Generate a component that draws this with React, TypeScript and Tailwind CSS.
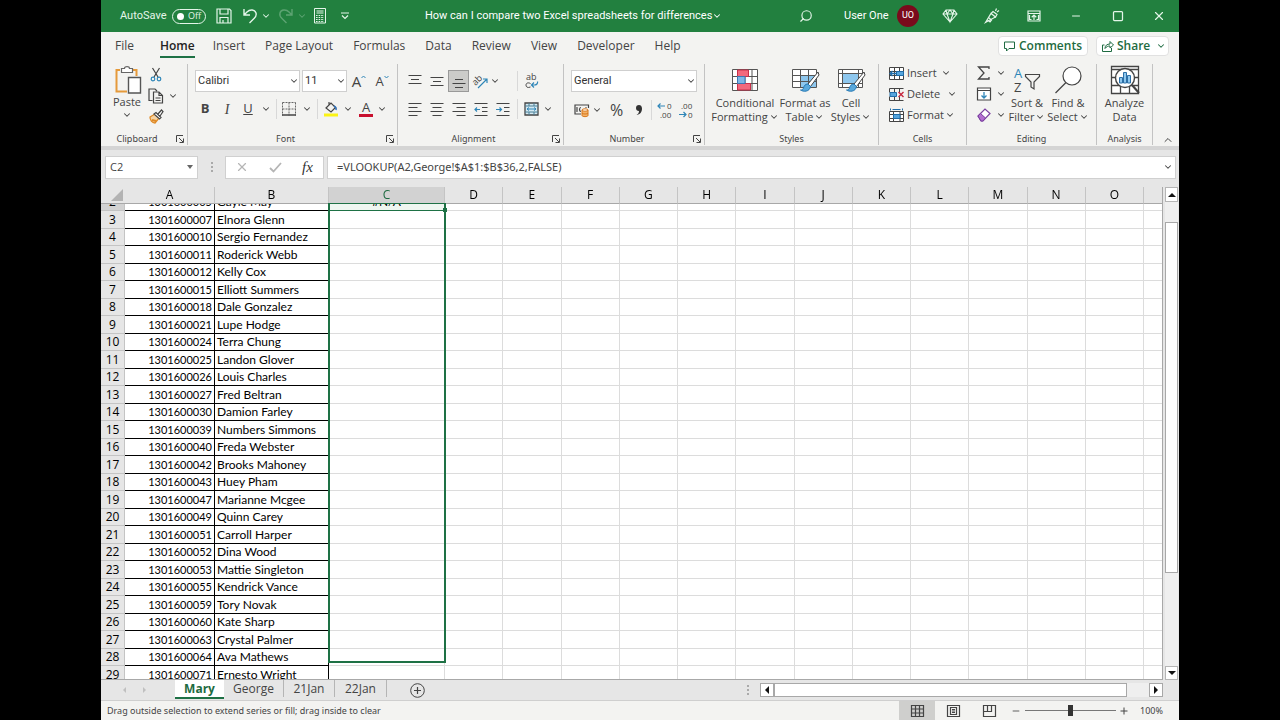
import React, { useLayoutEffect, useRef } from 'react';
import { ChevronDown, Search, Square, X, Minus } from 'lucide-react';

const ribbonTabs = ['File', 'Home', 'Insert', 'Page Layout', 'Formulas', 'Data', 'Review', 'View', 'Developer', 'Help'];

const columns = ['A', 'B', 'C', 'D', 'E', 'F', 'G', 'H', 'I', 'J', 'K', 'L', 'M', 'N', 'O', ''];

const people: [string, string][] = [
  ['1301600005', 'Gayle May'],
  ['1301600007', 'Elnora Glenn'],
  ['1301600010', 'Sergio Fernandez'],
  ['1301600011', 'Roderick Webb'],
  ['1301600012', 'Kelly Cox'],
  ['1301600015', 'Elliott Summers'],
  ['1301600018', 'Dale Gonzalez'],
  ['1301600021', 'Lupe Hodge'],
  ['1301600024', 'Terra Chung'],
  ['1301600025', 'Landon Glover'],
  ['1301600026', 'Louis Charles'],
  ['1301600027', 'Fred Beltran'],
  ['1301600030', 'Damion Farley'],
  ['1301600039', 'Numbers Simmons'],
  ['1301600040', 'Freda Webster'],
  ['1301600042', 'Brooks Mahoney'],
  ['1301600043', 'Huey Pham'],
  ['1301600047', 'Marianne Mcgee'],
  ['1301600049', 'Quinn Carey'],
  ['1301600051', 'Carroll Harper'],
  ['1301600052', 'Dina Wood'],
  ['1301600053', 'Mattie Singleton'],
  ['1301600055', 'Kendrick Vance'],
  ['1301600059', 'Tory Novak'],
  ['1301600060', 'Kate Sharp'],
  ['1301600063', 'Crystal Palmer'],
  ['1301600064', 'Ava Mathews'],
  ['1301600071', 'Ernesto Wright'],
];

interface IconProps {
  w: number;
  h: number;
  children: React.ReactNode;
  className?: string;
}

function Icon({ w, h, children, className = '' }: IconProps) {
  return (
    <svg
      width={w}
      height={h}
      viewBox={`0 0 ${w} ${h}`}
      fill="none"
      stroke="currentColor"
      strokeWidth="1"
      className={`shrink-0 overflow-visible ${className}`}
      aria-hidden="true"
    >
      {children}
    </svg>
  );
}

function Chevron({ className = '' }: { className?: string }) {
  return <ChevronDown className={`w-2.5 h-2.5 shrink-0 ${className}`} strokeWidth={2.5} aria-hidden="true" />;
}

interface ToolProps {
  label: string;
  className?: string;
  children: React.ReactNode;
}

function Tool({ label, className = '', children }: ToolProps) {
  return (
    <button type="button" aria-label={label} className={`flex items-center justify-center shrink-0 ${className}`}>
      {children}
    </button>
  );
}

function Divider() {
  return <span className="w-px h-5 bg-[#d8d8d8] shrink-0" />;
}

/* ---------- Title bar ---------- */

function TitleBar() {
  return (
    <header className="flex items-center h-8 bg-[#22803f] text-[#e4f5e9] shrink-0">
      <div className="flex items-center w-[324px] pl-[19px] shrink-0">
        <span className="w-[52px] text-[11px] font-['Roboto',sans-serif]">AutoSave</span>
        <button
          type="button"
          role="switch"
          aria-checked="false"
          aria-label="AutoSave"
          className="flex items-center justify-between w-[34px] h-[15px] rounded-full border border-current px-1 text-[9px] leading-3"
        >
          <span className="w-[7px] h-[7px] rounded-full bg-white" />
          Off
        </button>
        <Tool label="Save" className="w-9">
          <Icon w={16} h={16}>
            <path d="M1 1h12.5L15 2.500V15H1zM4 1v5h8V1M4 15v-5.500h8V15M7 12v3" strokeWidth="1.200" />
          </Icon>
        </Tool>
        <Tool label="Undo" className="w-4">
          <Icon w={16} h={16}>
            <path d="M2 1v6h6M2 7l3-3c3-3 8-2.500 9 1 .7 2.500-.3 4-2 5.500L7.500 15" strokeWidth="1.400" />
          </Icon>
        </Tool>
        <Tool label="Undo history" className="w-4"><Chevron /></Tool>
        <Tool label="Redo" className="w-6 opacity-30">
          <Icon w={16} h={16}>
            <path d="M14 1v6H8M14 7l-3-3C8 1 3 1.500 2 5c-.7 2.500.3 4 2 5.500L8.500 15" strokeWidth="1.400" />
          </Icon>
        </Tool>
        <Tool label="Redo history" className="w-2 opacity-30"><Chevron /></Tool>
        <Tool label="Calculator" className="w-7">
          <Icon w={12} h={16}>
            <path d="M.5 .5h11v14.500H.5zM2.500 3h7M2.500 5h7" />
            <path d="M2 7.500h8M2 9.500h8M2 11.500h8M2 13.500h8" strokeDasharray="1.600 1" strokeWidth="1.200" />
          </Icon>
        </Tool>
        <Tool label="Customize Quick Access Toolbar" className="w-[22px]">
          <Icon w={8} h={8}>
            <path d="M0 1h8M1 3.500l3 3 3-3" strokeWidth="1.200" />
          </Icon>
        </Tool>
      </div>
      <button
        type="button"
        className="flex items-center text-[11px] font-['Roboto',sans-serif] text-white whitespace-nowrap"
      >
        How can I compare two Excel spreadsheets for differences
        <Chevron />
      </button>
      <div className="flex items-center ml-auto shrink-0">
        <Tool label="Search" className="w-[30px]">
          <Search className="w-3.5 h-3.5 -scale-x-100" strokeWidth={2} />
        </Tool>
        <button type="button" className="flex items-center pl-[23px] pr-[10px] text-[11px] font-['Roboto',sans-serif] text-white">
          <span className="w-[53px] text-left whitespace-nowrap">User One</span>
          <span className="flex items-center justify-center w-[22px] h-[22px] rounded-full bg-[#7a0a1c] text-[9px]">UO</span>
        </button>
        <Tool label="Premium" className="w-[42px]">
          <Icon w={16} h={14}>
            <path d="M4 1h8l3 4-7 8L1 5zM1 5h14M5 5l3 8 3-8M4 1l1 4 3-4 3 4 1-4" strokeWidth="1.100" />
          </Icon>
        </Tool>
        <Tool label="Coming soon" className="w-[42px]">
          <Icon w={16} h={16}>
            <path d="M1.500 14.500L7 5.500 11.500 9zM9 3.500l4 3-1.500 2.500L7 5.500zM4.500 9.500l3 2.500-1.500 2-2.500-2M11.500 3l1-2.500M13 4l2-1.500" strokeWidth="1.200" />
          </Icon>
        </Tool>
        <Tool label="Ribbon display options" className="w-[42px]">
          <Icon w={14} h={12}>
            <path d="M1 1h12v10H1zM1 3.500h12M7 10V5M4.700 7.200L7 5l2.300 2.200M2.500 5v4.500h2M11.500 5v4.500h-2" strokeWidth="1.200" />
          </Icon>
        </Tool>
        <Tool label="Minimize" className="w-[42px]"><Minus className="w-3 h-3" /></Tool>
        <Tool label="Maximize" className="w-[42px]"><Square className="w-3 h-3" strokeWidth={2.5} /></Tool>
        <Tool label="Close" className="w-10"><X className="w-3.5 h-3.5" /></Tool>
      </div>
    </header>
  );
}

function TabRow() {
  return (
    <nav className="flex items-start h-7 pl-[14px] pr-[10px] pt-1 shrink-0">
      <div className="flex gap-5 text-[12px] leading-5 whitespace-nowrap">
        {ribbonTabs.map((tab) => (
          <button
            key={tab}
            type="button"
            className={
              tab === 'Home'
                ? 'ml-1.5 -mr-[2px] h-[22px] border-b-2 border-[#1e7145] font-semibold text-[#222]'
                : 'h-[22px] pb-[2px]'
            }
          >
            {tab}
          </button>
        ))}
      </div>
      <div className="flex gap-2 ml-auto text-[12px] leading-[18px] font-semibold text-[#1e6b41]">
        <button type="button" className="flex items-center justify-center gap-1 w-[90px] h-5 bg-white border border-[#e1e1e1] rounded-sm">
          <Icon w={11} h={11}>
            <path d="M.5 1h10v6.500H5L2.500 10V7.500h-2z" />
          </Icon>
          Comments
        </button>
        <button type="button" className="flex items-center w-[73px] h-5 pl-[5px] bg-white border border-[#e1e1e1] rounded-sm">
          <Icon w={12} h={12}>
            <path d="M2.500 5h-2v6.500h9V8M3 8.500c0-3 2-4.500 5-4.500V1.500l3.500 3.500L8 8V6C6 6 4.500 6.500 3 8.500z" />
          </Icon>
          <span className="w-[35px] ml-[3px] text-left">Share</span>
          <Chevron className="ml-1" />
        </button>
      </div>
    </nav>
  );
}

/* ---------- Ribbon ---------- */

interface GroupProps {
  title: string;
  width: string;
  launcher?: boolean;
  children: React.ReactNode;
}

function Group({ title, width, launcher = false, children }: GroupProps) {
  return (
    <section className={`flex flex-col shrink-0 h-[81px] border-r border-[#c3c3c3] ${width}`} aria-label={title}>
      <div className="flex-1">{children}</div>
      <div className="flex items-center h-3">
        <span className="flex-1 text-center text-[9px] leading-3 text-[#444] font-['Noto_Sans',sans-serif]">{title}</span>
        {launcher && (
          <Tool label={`${title} settings`} className="w-[14px]">
            <Icon w={8} h={8}>
              <path d="M.5 7V.5H7M3 3l4 4M7.500 3.500v4h-4" />
            </Icon>
          </Tool>
        )}
      </div>
    </section>
  );
}

interface ComboProps {
  label: string;
  value: string;
  width: string;
}

function Combo({ label, value, width }: ComboProps) {
  return (
    <div className={`relative shrink-0 ${width}`}>
      <select
        aria-label={label}
        defaultValue={value}
        className="block appearance-none w-full h-[22px] pl-[2px] bg-white border border-[#cfcfcf] text-[11px] leading-4 text-[#333] font-['Roboto',sans-serif]"
      >
        <option>{value}</option>
      </select>
      <Chevron className="absolute right-px top-[6px] pointer-events-none" />
    </div>
  );
}

function ClipboardGroup() {
  return (
    <Group title="Clipboard" width="w-[87px]" launcher>
      <div className="flex pl-3">
        <button type="button" className="flex flex-col items-center w-7 pt-[2px] text-[11px] leading-4">
          <Icon w={26} h={28}>
            <path d="M6 4H2.500v21.500H13M18 4h4.500v6" stroke="#e59a3b" strokeWidth="2" />
            <path d="M7.500 6.500v-4h3C10.500 0 15.500 0 15.500 2.500h3v4z" stroke="#666" fill="#fff" strokeWidth="1.200" />
            <path d="M14.500 11.500h12V27h-12z" stroke="#555" fill="#fff" strokeWidth="1.400" />
          </Icon>
          Paste
          <Chevron />
        </button>
        <div className="flex flex-col items-start pl-[3px]">
          <Tool label="Cut" className="w-6 h-[21px]">
            <Icon w={12} h={15}>
              <path d="M2.500 1L8 10M9.500 1L4 10" strokeWidth="1.200" />
              <circle cx="3" cy="12" r="1.800" stroke="#2f86b8" strokeWidth="1.200" />
              <circle cx="9" cy="12" r="1.800" stroke="#2f86b8" strokeWidth="1.200" />
            </Icon>
          </Tool>
          <Tool label="Copy" className="h-[21px] pl-1 gap-1">
            <Icon w={16} h={16}>
              <path d="M4.500 12.500H1V1h6l2 2M5.500 4h5.500l3.500 3.500V15h-9zM11 4v3.500h3.500M7.500 10h5M7.500 12.500h5" strokeWidth="1.200" />
            </Icon>
            <Chevron />
          </Tool>
          <Tool label="Format Painter" className="w-6 h-[21px]">
            <Icon w={15} h={15}>
              <path d="M1 8l5-3 4 4-4 5C3 14 1 11 1 8z" fill="#f6d3a3" stroke="#df8a26" strokeWidth="1.300" />
              <path d="M3 11l4 1" stroke="#df8a26" strokeWidth="2" />
              <path d="M5 5l2-1.500 5 5L10.500 10zM9 5l3.500-4L14 2.500 11 7" fill="#fff" strokeWidth="1.200" />
            </Icon>
          </Tool>
        </div>
      </div>
    </Group>
  );
}

function FontGroup() {
  return (
    <Group title="Font" width="w-[210px]" launcher>
      <div className="flex items-center pl-[7px] pt-[6px] h-7">
        <Combo label="Font" value="Calibri" width="w-[105px]" />
        <span className="w-[2px]" />
        <Combo label="Font Size" value="11" width="w-[45px]" />
        <Tool label="Increase Font Size" className="w-6 text-[15px] leading-4">
          A
          <Icon w={5} h={12}><path d="M.5 3L2.500 1l2 2" stroke="#2f86b8" /></Icon>
        </Tool>
        <Tool label="Decrease Font Size" className="w-[22px] text-[13px] leading-4">
          A
          <Icon w={5} h={12}><path d="M.5 1L2.500 3l2-2" stroke="#2f86b8" /></Icon>
        </Tool>
      </div>
      <div className="flex items-center pl-[6px] pt-[2px] h-[32px]">
        <Tool label="Bold" className="w-[22px] text-[13px] font-bold">B</Tool>
        <Tool label="Italic" className="w-[22px] text-[14px] italic font-['Liberation_Serif',serif]">I</Tool>
        <Tool label="Underline" className="w-5 text-[13px] underline">U</Tool>
        <Tool label="Underline style" className="w-4"><Chevron /></Tool>
        <span className="w-[2px]" />
        <Divider />
        <Tool label="Borders" className="w-6">
          <Icon w={14} h={14}>
            <path d="M.5 .5h13M.5 7h13M.5 .5v13M7 .5v13M13.500 .5v13" stroke="#666" strokeDasharray="2 1" />
            <path d="M0 13h14" strokeWidth="1.500" />
          </Icon>
        </Tool>
        <Tool label="Border style" className="w-3"><Chevron /></Tool>
        <span className="w-1" />
        <Divider />
        <Tool label="Fill Color" className="w-[26px]">
          <Icon w={16} h={16}>
            <path d="M3 7l5-5 4.500 4.500L8 11zM6 1v4" stroke="#444" strokeWidth="1.200" />
            <path d="M11 5c2 1 2.500 2 2 4" stroke="#2f6fb8" strokeWidth="1.500" />
            <path d="M1 14h14" stroke="#fbf314" strokeWidth="3" />
          </Icon>
        </Tool>
        <Tool label="Fill options" className="w-2"><Chevron /></Tool>
        <Tool label="Font Color" className="w-7">
          <span className="w-[14px] h-4 border-b-[3px] border-[#c8102e] text-center text-[13px] leading-3">A</span>
        </Tool>
        <Tool label="Font color options" className="w-1"><Chevron /></Tool>
      </div>
    </Group>
  );
}

function Lines({ d, className = '' }: { d: string; className?: string }) {
  return (
    <Icon w={14} h={14} className={className}>
      <path d={d} strokeWidth="1.200" />
    </Icon>
  );
}

function AlignmentGroup() {
  return (
    <Group title="Alignment" width="w-[166px]" launcher>
      <div className="flex items-center pl-[6px] pt-[6px] h-7">
        <Tool label="Top Align" className="w-[22px]"><Lines d="M.5 1.500h13M3 5.500h8M.5 9.500h13" /></Tool>
        <Tool label="Middle Align" className="w-[22px]"><Lines d="M.5 3.500h13M3 7.500h8M.5 11.500h13" /></Tool>
        <Tool label="Bottom Align" className="w-[21px] h-[22px] bg-[#cbcbc9] border border-[#999]">
          <Lines d="M3 5.500h8M.5 9.500h13M3 13.500h8" />
        </Tool>
        <Tool label="Orientation" className="w-6">
          <Icon w={16} h={16}>
            <text x="0" y="9" transform="rotate(-45 6 8)" fontSize="9" fill="currentColor" stroke="none">ab</text>
            <path d="M5 15L14 6M10 6h4v4" stroke="#2f86b8" strokeWidth="1.200" />
          </Icon>
        </Tool>
        <Tool label="Orientation options" className="w-1"><Chevron /></Tool>
        <span className="w-5" />
        <Divider />
        <Tool label="Wrap Text" className="w-7">
          <Icon w={14} h={16}>
            <text x="1" y="7" fontSize="9" fill="currentColor" stroke="none">ab</text>
            <path d="M5.500 10.500c-3-1.500-4.500 0-4.500 1.700s1.500 3 4.500 1.800" />
            <path d="M12.500 8.500c.5 2-1 3.500-3 3.500H7M9 9.500L6.500 12 9 14.500" stroke="#2f86b8" strokeWidth="1.200" />
          </Icon>
        </Tool>
      </div>
      <div className="flex items-center pl-[6px] pt-[2px] h-[32px]">
        <Tool label="Align Left" className="w-[22px]"><Lines d="M.5 1.500h13M.5 5.500h9M.5 9.500h13M.5 13.500h9" /></Tool>
        <Tool label="Center" className="w-[22px]"><Lines d="M.5 1.500h13M2.500 5.500h9M.5 9.500h13M2.500 13.500h9" /></Tool>
        <Tool label="Align Right" className="w-[22px]"><Lines d="M.5 1.500h13M4.500 5.500h9M.5 9.500h13M4.500 13.500h9" /></Tool>
        <Tool label="Decrease Indent" className="w-[22px]">
          <Icon w={14} h={14}>
            <path d="M.5 1.500h13M8 5.500h5.500M8 9.500h5.500M.5 13.500h13" strokeWidth="1.200" />
            <path d="M6 7.500H1M3 5.500l-2 2 2 2" stroke="#2f86b8" strokeWidth="1.200" />
          </Icon>
        </Tool>
        <Tool label="Increase Indent" className="w-[22px]">
          <Icon w={14} h={14}>
            <path d="M.5 1.500h13M8 5.500h5.500M8 9.500h5.500M.5 13.500h13" strokeWidth="1.200" />
            <path d="M0 7.500h5M3.500 5.500l2 2-2 2" stroke="#2f86b8" strokeWidth="1.200" />
          </Icon>
        </Tool>
        <span className="w-[3px]" />
        <Divider />
        <Tool label="Merge and Center" className="w-[26px]">
          <Icon w={15} h={14}>
            <path d="M1 1h13v12H1z" fill="#d3e9f2" strokeWidth="1.300" />
            <path d="M1 4h13M1 10h13M5 1v3M10 1v3M5 10v3M10 10v3" stroke="#4a7f95" />
            <path d="M3 7h9M5 5.500L3 7l2 1.500M10 5.500L12 7l-2 1.500" stroke="#2f86b8" />
          </Icon>
        </Tool>
        <Tool label="Merge options" className="w-2"><Chevron /></Tool>
      </div>
    </Group>
  );
}

function NumberGroup() {
  return (
    <Group title="Number" width="w-[141px]" launcher>
      <div className="flex items-center pl-[7px] pt-[6px] h-7">
        <Combo label="Number Format" value="General" width="w-[126px]" />
      </div>
      <div className="flex items-center pl-[7px] pt-[2px] h-[34px]">
        <Tool label="Accounting Format" className="w-[21px]">
          <Icon w={16} h={13}>
            <path d="M7 10H1V1h13.500v3M3.500 3.500H3v4h.5M7 3.500c-2 0-2 4 0 4M11.500 3.500h1" strokeWidth="1.200" />
            <path d="M8 6v5.500c0 1.500 6 1.500 6 0V6z" fill="#f2b36b" stroke="#d9771a" />
            <ellipse cx="11" cy="6" rx="3" ry="1.200" fill="#fff" stroke="#d9771a" />
            <path d="M8 9c0 1.300 6 1.300 6 0" stroke="#d9771a" />
          </Icon>
        </Tool>
        <Tool label="Accounting options" className="w-[10px]"><Chevron /></Tool>
        <Tool label="Percent Style" className="w-[29px] text-[16px] leading-5">%</Tool>
        <Tool label="Comma Style" className="w-4">
          <Icon w={8} h={12}>
            <path d="M4 1a3 3 0 0 0 0 6c0 2-1 3-2.500 4C5 10.500 7 8 7 4.500 7 2 5.500 1 4 1z" fill="#333" stroke="none" />
          </Icon>
        </Tool>
        <span className="w-1" />
        <Divider />
        <Tool label="Increase Decimal" className="w-[26px]">
          <Icon w={16} h={16}>
            <text x="10" y="7" fontSize="8" fill="currentColor" stroke="none">0</text>
            <text x="3" y="16" fontSize="8" fill="currentColor" stroke="none">.00</text>
            <path d="M8 4H1M3.500 1.500L1 4l2.500 2.500" stroke="#2f86b8" strokeWidth="1.200" />
          </Icon>
        </Tool>
        <Tool label="Decrease Decimal" className="w-4">
          <Icon w={16} h={16}>
            <text x="3" y="7" fontSize="8" fill="currentColor" stroke="none">.00</text>
            <text x="10" y="16" fontSize="8" fill="currentColor" stroke="none">0</text>
            <path d="M1 12.500h7M5.500 10L8 12.500 5.500 15" stroke="#2f86b8" strokeWidth="1.200" />
          </Icon>
        </Tool>
      </div>
    </Group>
  );
}

interface BigToolProps {
  lines: [string, string];
  width: string;
  chevron?: boolean;
  children: React.ReactNode;
}

function BigTool({ lines, width, chevron = true, children }: BigToolProps) {
  return (
    <button type="button" className={`flex flex-col items-center shrink-0 text-[11px] leading-[14px] whitespace-nowrap ${width}`}>
      <span className="flex items-center justify-center h-8">{children}</span>
      <span>{lines[0]}</span>
      <span className="flex items-center gap-px">
        {lines[1]}
        {chevron && <Chevron />}
      </span>
    </button>
  );
}

function Brush() {
  return (
    <>
      <path d="M27 5L17 17l2.500 2.500L28 8z" fill="#fff" stroke="#444" />
      <path d="M17 17c-3 0-4 2-4.500 4-.5 1.500-1.500 2-3 2 3 2 9 2 10-3.500z" fill="#5aa9dc" stroke="#2477b3" />
    </>
  );
}

function StylesGroup() {
  return (
    <Group title="Styles" width="w-[174px]">
      <div className="flex pl-[6px]">
        <BigTool lines={['Conditional', 'Formatting']} width="w-[68px]">
          <Icon w={26} h={22}>
            <path d="M.5 .5h25v21H.5zM.5 7.500h25M.5 14.500h25M5.500 .5v21M13 .5v21M20 .5v21" fill="#fff" stroke="#555" />
            <path d="M5.500 1h11v6.500h-11zM5.500 14.500h13V21h-13z" fill="#f2697d" stroke="#c9304a" />
            <path d="M5.500 7.500H13v7H5.500z" fill="#7fb7e6" stroke="#3c78b4" />
          </Icon>
        </BigTool>
        <BigTool lines={['Format as', 'Table']} width="w-[52px]">
          <Icon w={28} h={26}>
            <path d="M1.500 2.500h24v18h-24z" fill="#fff" stroke="none" />
            <path d="M9.500 8.500h16v12h-16z" fill="#8ec7ee" stroke="none" />
            <path d="M1.500 2.500h24v18h-24zM1.500 8.500h24M1.500 14.500h24M9.500 2.500v18M17.500 2.500v18" stroke="#555" />
            <Brush />
          </Icon>
        </BigTool>
        <BigTool lines={['Cell', 'Styles']} width="w-[40px]">
          <Icon w={28} h={26}>
            <path d="M1.500 2.500h24v18h-24z" fill="#fff" stroke="none" />
            <path d="M5.500 6.500h16v10h-16z" fill="#8ec7ee" stroke="none" />
            <path d="M1.500 2.500h24v18h-24zM1.500 6.500h24M1.500 16.500h24M5.500 2.500v18M21.500 2.500v18" stroke="#555" />
            <Brush />
          </Icon>
        </BigTool>
      </div>
    </Group>
  );
}

function CellsGroup() {
  return (
    <Group title="Cells" width="w-[88px]">
      <div className="flex flex-col items-start pl-[10px] text-[11px] leading-[18px]">
        <button type="button" className="flex items-center h-[18px]">
          <Icon w={15} h={13}>
            <path d="M.5 .5h14v12H.5zM.5 4.500h14M.5 8.500h14M5.500 .5v12M10.500 .5v12" fill="#fff" stroke="#444" />
            <path d="M7.500 4.500h7v4h-7z" fill="#56a5dd" stroke="#1f6ca8" />
            <path d="M7.500 6.500H1M3.500 4L1 6.500 3.500 9" stroke="#1f6ca8" strokeWidth="1.300" />
          </Icon>
          <span className="w-[34px] ml-[3px] text-left">Insert</span>
          <Chevron />
        </button>
        <button type="button" className="flex items-center h-6">
          <Icon w={15} h={13}>
            <path d="M.5 .5h14M.5 12.500h14M.5 .5v4M.5 8.500v4M5.500 .5v4M10.500 .5v4M5.500 8.500v4M10.500 8.500v4" stroke="#444" />
            <path d="M1 4.500h6.500v4H1z" fill="#56a5dd" stroke="#1f6ca8" />
            <path d="M9.500 4l5 5M14.500 4l-5 5" stroke="#c6283d" strokeWidth="1.400" />
          </Icon>
          <span className="w-10 ml-[3px] text-left">Delete</span>
          <Chevron />
        </button>
        <button type="button" className="flex items-center h-[18px]">
          <Icon w={15} h={14}>
            <path d="M3.500 1.500h8M1.500 .5v2M13.500 .5v2" stroke="#1f6ca8" />
            <path d="M.5 3.500h14v10H.5zM4.500 3.500v10M11 3.500v10M.5 6.500h14M.5 10.500h14" fill="#fff" stroke="#444" />
            <path d="M4.500 6.500H11v4H4.500z" fill="#56a5dd" stroke="#1f6ca8" />
          </Icon>
          <span className="w-[38px] ml-[3px] text-left">Format</span>
          <Chevron />
        </button>
      </div>
    </Group>
  );
}

function EditingGroup() {
  return (
    <Group title="Editing" width="w-[130px]">
      <div className="flex pl-[9px]">
        <div className="flex flex-col w-[30px]">
          <Tool label="AutoSum" className="h-[18px] gap-1">
            <Icon w={16} h={14}>
              <path d="M13 3V1H2.500L8 7l-5.500 6H13v-2" strokeWidth="1.300" />
            </Icon>
            <Chevron />
          </Tool>
          <Tool label="Fill" className="h-6 gap-1">
            <Icon w={16} h={14}>
              <path d="M1.500 1h13v12h-13zM1.500 3.500h13" fill="#fff" strokeWidth="1.200" />
              <path d="M8 5v6M5.500 8.500L8 11l2.500-2.500" stroke="#2f86b8" strokeWidth="1.300" />
            </Icon>
            <Chevron />
          </Tool>
          <Tool label="Clear" className="h-[18px] gap-1">
            <Icon w={16} h={14}>
              <path d="M2 8l7-7 5 4.500-7 7.500H5z" fill="#fff" stroke="#7b3fa0" strokeWidth="1.200" />
              <path d="M2 8l2.500-2.500 5 4.500L7 13H5z" fill="#b36fd0" stroke="#7b3fa0" />
            </Icon>
            <Chevron />
          </Tool>
        </div>
        <BigTool lines={['Sort &', 'Filter']} width="w-[42px]">
          <Icon w={28} h={28}>
            <text x="1" y="12" fontSize="13" fill="#2f86b8" stroke="none">A</text>
            <text x="1" y="26" fontSize="13" fill="currentColor" stroke="none">Z</text>
            <path d="M12.500 8.500h14v2L21 16v7l-3-2v-5l-5.500-5.500z" strokeWidth="1.200" />
          </Icon>
        </BigTool>
        <BigTool lines={['Find &', 'Select']} width="w-[40px]">
          <Icon w={28} h={28}>
            <circle cx="18" cy="10" r="9" fill="#fff" strokeWidth="1.200" />
            <path d="M12 16.500L1.500 27" strokeWidth="1.300" />
          </Icon>
        </BigTool>
      </div>
    </Group>
  );
}

function AnalysisGroup() {
  return (
    <Group title="Analysis" width="w-[56px]">
      <BigTool lines={['Analyze', 'Data']} width="w-full" chevron={false}>
        <Icon w={30} h={30}>
          <path d="M1.500 1.500h27v27h-27zM1.500 4.500h27M1.500 20.500h27M10.500 20.500v8M19.500 20.500v8M1.500 12.500h27" fill="#fff" stroke="#444" strokeWidth="1.300" />
          <circle cx="15" cy="13" r="9.500" fill="#fff" stroke="#444" strokeWidth="1.400" />
          <path d="M22 20l7 8" stroke="#444" strokeWidth="2" />
          <path d="M9.500 12.500h3V18h-3zM13.500 7.500h3V18h-3zM17.500 10.500h3V18h-3z" fill="#8ec7ee" stroke="#2b6ea6" />
        </Icon>
      </BigTool>
    </Group>
  );
}

function Ribbon() {
  return (
    <div className="flex h-[90px] pt-1 border-b-[4px] border-[#d4d4d4] shrink-0">
      <ClipboardGroup />
      <FontGroup />
      <AlignmentGroup />
      <NumberGroup />
      <StylesGroup />
      <CellsGroup />
      <EditingGroup />
      <AnalysisGroup />
      <div className="flex items-end justify-end flex-1 pr-[5px]">
        <Tool label="Collapse the Ribbon" className="h-3">
          <ChevronDown className="w-3 h-3 rotate-180" />
        </Tool>
      </div>
    </div>
  );
}

function FormulaBar() {
  return (
    <div className="flex items-center h-[37px] pl-1 pr-[3px] pb-[3px] bg-[#e6e6e6] text-[11px] shrink-0">
      <div className="flex items-center w-[93px] h-[23px] pr-1 bg-white border border-[#d0d0d0]">
        <input aria-label="Name Box" defaultValue="C2" className="flex-1 min-w-0 pl-1 outline-none" />
        <Icon w={6} h={4} className="text-[#666]"><path d="M0 0h6L3 4z" fill="currentColor" stroke="none" /></Icon>
      </div>
      <span className="flex flex-col items-center gap-[2px] w-[27px]">
        <span className="w-[2px] h-[2px] bg-[#aaa]" />
        <span className="w-[2px] h-[2px] bg-[#aaa]" />
        <span className="w-[2px] h-[2px] bg-[#aaa]" />
      </span>
      <div className="flex items-center w-[99px] h-[23px] bg-white border border-[#d0d0d0]">
        <Tool label="Cancel" className="w-8 text-[#b5b5b5]"><X className="w-3.5 h-3.5" /></Tool>
        <Tool label="Enter" className="w-[34px] text-[#b5b5b5]">
          <Icon w={13} h={11}><path d="M1 6l3.500 3.500L12 1" strokeWidth="1.800" /></Icon>
        </Tool>
        <Tool label="Insert Function" className="w-[31px] font-['Liberation_Serif',serif] italic text-[15px] leading-5 text-[#333]">fx</Tool>
      </div>
      <div className="flex items-center flex-1 h-[23px] ml-[3px] pr-[2px] bg-white border border-[#d0d0d0]">
        <input
          aria-label="Formula"
          defaultValue="=VLOOKUP(A2,George!$A$1:$B$36,2,FALSE)"
          className="flex-1 min-w-0 pl-[9px] outline-none font-['Noto_Sans',sans-serif]"
        />
        <Tool label="Expand Formula Bar"><Chevron /></Tool>
      </div>
    </div>
  );
}

/* ---------- Sheet ---------- */

function Sheet() {
  const viewRef = useRef<HTMLDivElement>(null);

  // the sheet is scrolled a little past the top of row 2
  useLayoutEffect(() => {
    if (viewRef.current) viewRef.current.scrollTop = 10;
  }, []);

  return (
    <div className="relative flex-1 min-w-0 border-r border-b border-[#a8a8a8]">
      <div ref={viewRef} className="h-full overflow-hidden bg-white">
        <table className="w-full table-fixed border-separate border-spacing-0 text-black">
          <colgroup>
            <col className="w-6" />
            <col className="w-[90px]" />
            <col className="w-[114px]" />
            <col className="w-[116px]" />
            {columns.slice(3, 15).map((c) => (
              <col key={c} />
            ))}
            <col className="w-[18px]" />
          </colgroup>
          <thead>
            <tr>
              <th aria-label="Select all" className="sticky top-0 h-[17px] p-0 bg-[#e6e6e6] border-b border-[#a8a8a8]">
                <Icon w={12} h={12} className="ml-auto mr-[2px]">
                  <path d="M12 0v12H0z" fill="#b3b3b3" stroke="none" />
                </Icon>
              </th>
              {columns.map((c) => (
                <th
                  key={c}
                  className={`sticky top-0 h-[17px] p-0 text-[12px] leading-4 font-normal border-b ${
                    c === 'C'
                      ? 'bg-[#d2d2d2] text-[#1e6b41] border-[#1e7145]'
                      : 'bg-[#e6e6e6] border-[#a8a8a8]'
                  } ${c === '' ? '' : 'border-r border-r-[#c4c4c4]'}`}
                >
                  {c}
                </th>
              ))}
            </tr>
          </thead>
          <tbody className="font-[Lato,sans-serif] text-[12px]">
            {people.map(([id, name], i) => (
              <tr key={id} className={i % 2 ? 'h-[18px]' : 'h-[17px]'}>
                <th
                  className={`p-0 font-normal font-['Open_Sans',sans-serif] text-[12px] leading-4 border-r border-b border-[#c4c4c4] ${
                    i === 0 ? 'bg-[#d2d2d2]' : 'bg-[#e6e6e6]'
                  }`}
                >
                  {i + 2}
                </th>
                <td className="p-0 pr-[2px] text-right text-[11px] leading-4 border-r border-b border-black">{id}</td>
                <td className="p-0 pl-[2px] leading-4 whitespace-nowrap border-r border-b border-black">{name}</td>
                <td className={`p-0 text-center leading-4 border-r border-b border-[#dcdcdc] ${i === 0 ? 'bg-[#eef6f0]' : ''}`}>
                  {i === 0 ? '#N/A' : ''}
                </td>
                {columns.slice(3).map((c) => (
                  <td key={c} className={`p-0 border-b border-[#dcdcdc] ${c === '' ? '' : 'border-r'}`} />
                ))}
              </tr>
            ))}
          </tbody>
        </table>
      </div>
      {/* fill range being dragged, with the handle of the active cell */}
      <div className="absolute left-[227px] top-4 w-[118px] h-[460px] border-2 border-t border-[#1e7145] pointer-events-none">
        <div className="relative h-[7px] border-b border-[#1e7145]">
          <span className="absolute -right-[3px] -bottom-[2px] w-1 h-1 bg-[#1e7145]" />
        </div>
      </div>
    </div>
  );
}

function Arrow({ d }: { d: string }) {
  return (
    <Icon w={8} h={8}>
      <path d={d} fill="#111" stroke="none" />
    </Icon>
  );
}

function VerticalScroll() {
  return (
    <div className="flex flex-col w-4 pl-[2px] pr-px bg-[#e6e6e6] shrink-0">
      <Tool label="Scroll up" className="h-[15px] bg-white border border-[#b5b5b5]"><Arrow d="M0 6l4-4 4 4z" /></Tool>
      <div className="flex flex-col flex-1 pt-5 bg-[#efefef]">
        <div className="h-[79%] bg-white border border-[#a8a8a8]" />
      </div>
      <Tool label="Scroll down" className="h-[14px] bg-white border border-[#b5b5b5]"><Arrow d="M0 2l4 4 4-4z" /></Tool>
    </div>
  );
}

function SheetTabs() {
  return (
    <div className="flex h-[21px] pr-4 bg-[#e6e6e6] border-b border-[#cfcfcf] text-[12px] leading-[17px] text-[#444] shrink-0">
      <div className="flex items-center w-[74px] pl-[13px] text-[#c0c0c0]">
        <Tool label="Previous sheet" className="w-5">
          <Icon w={5} h={6}><path d="M4 0v6L1 3z" fill="currentColor" stroke="none" /></Icon>
        </Tool>
        <Tool label="Next sheet" className="w-5">
          <Icon w={5} h={6}><path d="M1 0v6l3-3z" fill="currentColor" stroke="none" /></Icon>
        </Tool>
      </div>
      <button type="button" className="w-[49px] h-[19px] bg-white border-b-2 border-[#1e7145] font-bold text-[#1e6b41]">Mary</button>
      <button type="button" className="w-[59px] h-[17px]">George</button>
      <button type="button" className="w-[51px] h-[17px] border-l border-[#b5b5b5]">21Jan</button>
      <button type="button" className="w-[53px] h-[17px] border-x border-[#b5b5b5]">22Jan</button>
      <Tool label="New sheet" className="w-[60px]">
        <Icon w={15} h={15}>
          <circle cx="7.500" cy="7.500" r="6.800" />
          <path d="M7.500 4v7M4 7.500h7" strokeWidth="1.200" />
        </Icon>
      </Tool>
      <div className="flex items-center ml-auto">
        <span className="flex flex-col gap-[2px] w-[13px]">
          <span className="w-[2px] h-[2px] bg-[#aaa]" />
          <span className="w-[2px] h-[2px] bg-[#aaa]" />
          <span className="w-[2px] h-[2px] bg-[#aaa]" />
        </span>
        <Tool label="Scroll left" className="w-[14px] h-[14px] bg-white border border-[#a8a8a8]"><Arrow d="M6 0L2 4l4 4z" /></Tool>
        <div className="w-[375px] h-[14px] bg-[#efefef]">
          <div className="w-[353px] h-full bg-white border border-[#a8a8a8]" />
        </div>
        <Tool label="Scroll right" className="w-[14px] h-[14px] bg-white border border-[#a8a8a8]"><Arrow d="M2 0l4 4-4 4z" /></Tool>
      </div>
    </div>
  );
}

function StatusBar() {
  return (
    <footer className="flex items-center h-[19px] pl-[6px] pr-4 text-[9px] font-['Noto_Sans',sans-serif] text-[#444] shrink-0">
      <span>Drag outside selection to extend series or fill; drag inside to clear</span>
      <div className="flex items-center h-full ml-auto">
        <Tool label="Normal" className="w-9 h-full bg-[#cfcfcd]">
          <Icon w={13} h={12}><path d="M.5 .5h12v11H.5zM.5 4h12M.5 8h12M4.500 .5v11M8.500 .5v11" strokeWidth="1.200" /></Icon>
        </Tool>
        <Tool label="Page Layout" className="w-9 h-full">
          <Icon w={13} h={12}><path d="M.5 .5h12v11H.5zM3.500 2.500h6v7h-6zM5 4.500h3M5 6h3M5 7.500h3" strokeWidth="1.200" /></Icon>
        </Tool>
        <Tool label="Page Break Preview" className="w-9 h-full">
          <Icon w={13} h={12}><path d="M.5 .5h12v11H.5zM4.500 .5v6h4v-6M.5 6.500h4" strokeWidth="1.200" /></Icon>
        </Tool>
        <Tool label="Zoom out" className="w-[18px]"><Minus className="w-2.5 h-2.5" /></Tool>
        <input
          type="range"
          aria-label="Zoom"
          min="0"
          max="200"
          defaultValue="100"
          className="w-[91px] h-[10px] appearance-none bg-transparent [&::-webkit-slider-runnable-track]:h-px [&::-webkit-slider-runnable-track]:bg-[#777] [&::-webkit-slider-thumb]:appearance-none [&::-webkit-slider-thumb]:w-[5px] [&::-webkit-slider-thumb]:h-[11px] [&::-webkit-slider-thumb]:-mt-[5px] [&::-webkit-slider-thumb]:bg-[#333]"
        />
        <Tool label="Zoom in" className="w-4">
          <Icon w={8} h={8}><path d="M4 .5v7M.5 4h7" /></Icon>
        </Tool>
        <button type="button" className="w-[31px] text-right">100%</button>
      </div>
    </footer>
  );
}

export default function App() {
  return (
    <div className="h-screen px-[101px] bg-black font-['Open_Sans',sans-serif] text-[#444]">
      <div className="flex flex-col h-full bg-[#f3f3f1] overflow-hidden">
        <TitleBar />
        <TabRow />
        <Ribbon />
        <FormulaBar />
        <main className="flex flex-1 min-h-0">
          <Sheet />
          <VerticalScroll />
        </main>
        <SheetTabs />
        <StatusBar />
      </div>
    </div>
  );
}
